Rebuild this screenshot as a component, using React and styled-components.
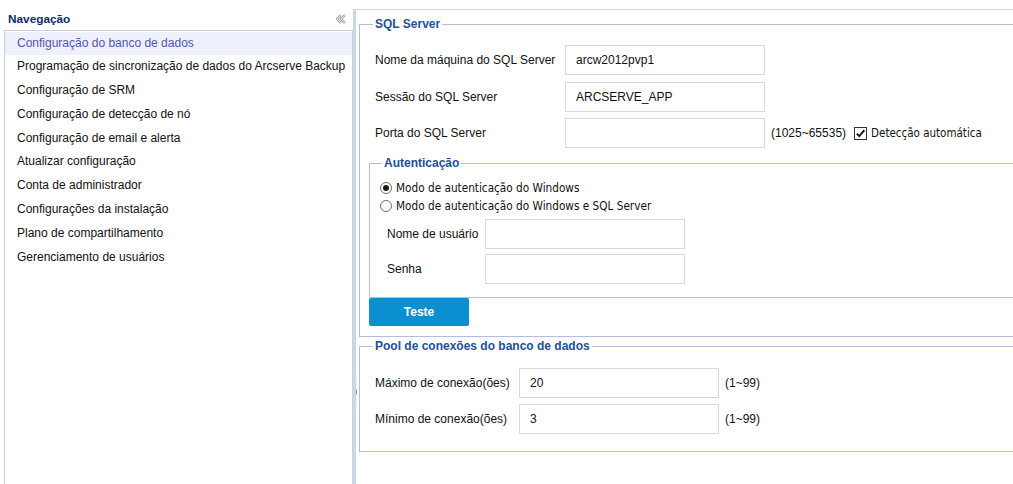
import React from "react";
import styled, { createGlobalStyle } from "styled-components";

const Global = createGlobalStyle`
  html, body { margin: 0; padding: 0; background: #fff; }
  body { font-family: "Liberation Sans", Arial, sans-serif; font-size: 12px; color: #111; overflow: hidden; }
  * { box-sizing: border-box; }
`;

const Page = styled.div`
  display: flex;
  width: 1013px;
  height: 484px;
  overflow: hidden;
`;

const Sidebar = styled.aside`
  flex: 0 0 353px;
  display: flex;
  flex-direction: column;
  padding-left: 4px;
`;

const SidebarHeader = styled.div`
  height: 30px;
  display: flex;
  align-items: center;
  justify-content: space-between;
  padding: 8px 6px 0 4px;
`;

const SidebarTitle = styled.span`
  font-weight: bold;
  font-size: 11.8px;
  color: #0f2a68;
`;

const CollapseBtn = styled.span`
  display: flex;
  width: 11px;
  height: 10px;
`;

const NavList = styled.ul`
  flex: 1;
  list-style: none;
  margin: 0;
  padding: 0.5px 0 0;
  border: 1px solid #c8d1dd;
  border-bottom: none;
`;

const NavItem = styled.li`
  height: 23.8px;
  line-height: 23.8px;
  padding-left: 12px;
  white-space: nowrap;
  font-size: 12px;
  color: ${(p) => (p.$active ? "#4f57ad" : "#111")};
  background: ${(p) => (p.$active ? "#eef0fb" : "transparent")};
`;

const Main = styled.main`
  position: relative;
  flex: 1;
  min-width: 0;
  margin-top: 9px;
  border-top: 1px solid #d5d8df;
  border-left: 3px solid #cbd8e5;
  padding-left: 3px;
  overflow: hidden;
`;

const SplitHandle = styled.div`
  position: absolute;
  left: -3px;
  top: 365px;
  width: 4px;
  height: 34px;
  background: #eef1f5;
  display: flex;
  align-items: center;
  justify-content: center;
  &::after {
    content: "";
    border-top: 3px solid transparent;
    border-bottom: 3px solid transparent;
    border-right: 3px solid #8a8f96;
  }
`;

const Fieldset = styled.fieldset`
  margin: ${(p) => p.$mt || 0}px -40px 0 ${(p) => p.$ml || 0}px;
  padding: ${(p) => p.$pt}px 0 ${(p) => p.$pb}px ${(p) => p.$pl}px;
  border: 1px solid #b9bdd3;
  min-width: 0;
`;

const Legend = styled.legend`
  font-weight: bold;
  font-size: 12px;
  line-height: 14px;
  color: #214f99;
  padding: 0 2px;
  margin-left: ${(p) => p.$ml || 0}px;
`;

const Rows = styled.div`
  display: flex;
  flex-direction: column;
  gap: ${(p) => p.$gap || 6}px;
  padding-left: ${(p) => p.$pl || 0}px;
`;

const Row = styled.div`
  display: flex;
  align-items: center;
  height: 30px;
`;

const Label = styled.label`
  flex: 0 0 ${(p) => p.$w}px;
  font-size: 12px;
  color: #111;
  white-space: nowrap;
`;

const TextInput = styled.input`
  width: 200px;
  height: 30px;
  border: 1px solid #d9d9d9;
  padding: 0 10px;
  font-family: "Liberation Sans", Arial, sans-serif;
  font-size: 12px;
  color: #111;
  outline: none;
`;

const Hint = styled.span`
  margin-left: 6px;
  font-size: 12px;
  color: #111;
  white-space: nowrap;
`;

const CheckWrap = styled.label`
  display: flex;
  align-items: center;
  margin-left: 8px;
  gap: 4px;
  font-family: "DejaVu Sans Condensed", "DejaVu Sans", sans-serif;
  font-size: 11.5px;
  color: #111;
  white-space: nowrap;
`;

const CheckBox = styled.span`
  width: 13px;
  height: 13px;
  border: 1px solid #333;
  background: #fff;
  display: flex;
  align-items: center;
  justify-content: center;
`;

const RadioGroup = styled.div`
  display: flex;
  flex-direction: column;
  padding-top: 1px;
  margin-bottom: 4px;
`;

const RadioRow = styled.label`
  display: flex;
  align-items: center;
  height: 18px;
  gap: 4px;
  font-family: "DejaVu Sans Condensed", "DejaVu Sans", sans-serif;
  font-size: 11.7px;
  color: #111;
  white-space: nowrap;
`;

const RadioDot = styled.span`
  width: 12px;
  height: 12px;
  border-radius: 50%;
  border: 1px solid #6e6e6e;
  background: #fff;
  display: flex;
  align-items: center;
  justify-content: center;
  &::after {
    content: "";
    width: 6px;
    height: 6px;
    border-radius: 50%;
    background: ${(p) => (p.$checked ? "#1a1a1a" : "transparent")};
  }
`;

const Button = styled.button`
  display: block;
  width: 100px;
  height: 28px;
  margin-left: -6px;
  border: none;
  border-radius: 2px;
  background: #0b8fd0;
  color: #fff;
  font-family: "Liberation Sans", Arial, sans-serif;
  font-weight: bold;
  font-size: 12px;
`;

const navItems = [
  "Configuração do banco de dados",
  "Programação de sincronização de dados do Arcserve Backup",
  "Configuração de SRM",
  "Configuração de detecção de nó",
  "Configuração de email e alerta",
  "Atualizar configuração",
  "Conta de administrador",
  "Configurações da instalação",
  "Plano de compartilhamento",
  "Gerenciamento de usuários",
];

export default function App() {
  return (
    <>
      <Global />
      <Page>
        <Sidebar>
          <SidebarHeader>
            <SidebarTitle>Navegação</SidebarTitle>
            <CollapseBtn>
              <svg width="11" height="10" viewBox="0 0 11 10">
                <path d="M5 1 L1 5 L5 9 M9 1 L5 5 L9 9" fill="none" stroke="#9a9a9a" strokeWidth="2.2" />
                <path d="M5 1 L1 5 L5 9 M9 1 L5 5 L9 9" fill="none" stroke="#fff" strokeWidth="0.7" />
              </svg>
            </CollapseBtn>
          </SidebarHeader>
          <NavList>
            {navItems.map((t, i) => (
              <NavItem key={t} $active={i === 0}>{t}</NavItem>
            ))}
          </NavList>
        </Sidebar>
        <Main>
          <SplitHandle />
          <Fieldset $mt={7} $pt={14} $pb={10} $pl={15}>
            <Legend $ml={-2}>SQL Server</Legend>
            <Rows $gap={6.5}>
              <Row>
                <Label $w={190}>Nome da máquina do SQL Server</Label>
                <TextInput defaultValue="arcw2012pvp1" />
              </Row>
              <Row>
                <Label $w={190}>Sessão do SQL Server</Label>
                <TextInput defaultValue="ARCSERVE_APP" />
              </Row>
              <Row>
                <Label $w={190}>Porta do SQL Server</Label>
                <TextInput defaultValue="" />
                <Hint>(1025~65535)</Hint>
                <CheckWrap>
                  <CheckBox>
                    <svg width="11" height="11" viewBox="0 0 11 11">
                      <path d="M1.8 5.6 L4.3 8.2 L9.4 2.2" fill="none" stroke="#111" strokeWidth="1.8" />
                    </svg>
                  </CheckBox>
                  Detecção automática
                </CheckWrap>
              </Row>
            </Rows>
            <Fieldset $mt={8} $ml={-6} $pt={8} $pb={13} $pl={10}>
              <Legend $ml={2}>Autenticação</Legend>
              <RadioGroup>
                <RadioRow>
                  <RadioDot $checked />
                  Modo de autenticação do Windows
                </RadioRow>
                <RadioRow>
                  <RadioDot />
                  Modo de autenticação do Windows e SQL Server
                </RadioRow>
              </RadioGroup>
              <Rows $gap={5} $pl={7}>
                <Row>
                  <Label $w={98}>Nome de usuário</Label>
                  <TextInput defaultValue="" />
                </Row>
                <Row>
                  <Label $w={98}>Senha</Label>
                  <TextInput type="password" defaultValue="" />
                </Row>
              </Rows>
            </Fieldset>
            <Button>Teste</Button>
          </Fieldset>
          <Fieldset $mt={2} $pt={15} $pb={17} $pl={15}>
            <Legend $ml={-2}>Pool de conexões do banco de dados</Legend>
            <Rows $gap={6}>
              <Row>
                <Label $w={144}>Máximo de conexão(ões)</Label>
                <TextInput defaultValue="20" />
                <Hint>(1~99)</Hint>
              </Row>
              <Row>
                <Label $w={144}>Mínimo de conexão(ões)</Label>
                <TextInput defaultValue="3" />
                <Hint>(1~99)</Hint>
              </Row>
            </Rows>
          </Fieldset>
        </Main>
      </Page>
    </>
  );
}
